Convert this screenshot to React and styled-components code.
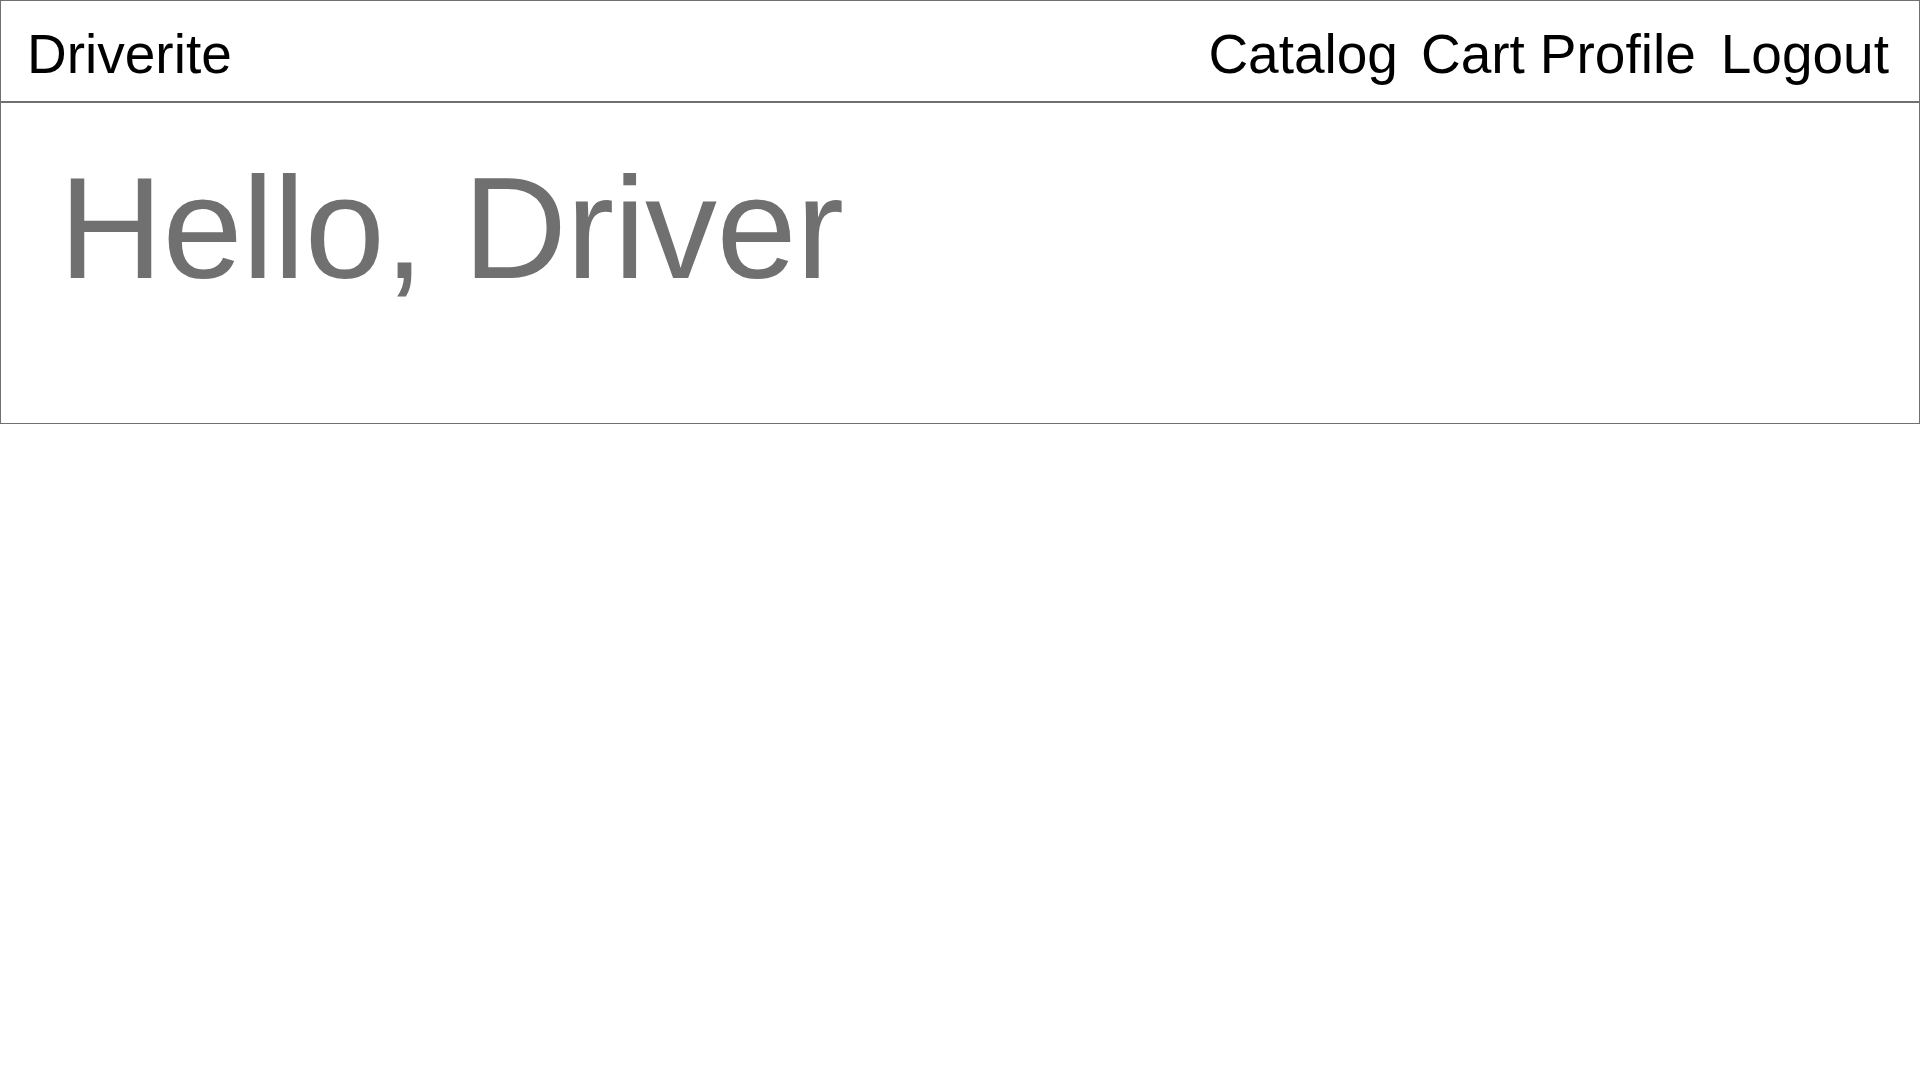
import React from 'react';
import styled, { createGlobalStyle } from 'styled-components';

const GlobalStyle = createGlobalStyle`
  html, body { margin: 0; padding: 0; background: #fff; }
  body { font-family: "Liberation Sans", Arial, sans-serif; }
  * { box-sizing: border-box; }
`;

const Header = styled.header`
  display: flex; align-items: center; justify-content: space-between;
  border: 1px solid #707070; height: 102px; padding: 0 30px 0 26px;
`;

const Brand = styled.div`
  font-size: 55px; line-height: 63px; color: #000; padding-top: 6px;
`;

const Nav = styled.nav`
  display: flex; align-items: center; gap: 16px; padding-top: 6px;
`;

const NavLink = styled.a`
  font-size: 55px; line-height: 63px; color: #000; text-decoration: none; cursor: pointer;
  margin-left: ${p => p.$extra || 0}px;
`;

const Welcome = styled.section`
  border: 1px solid #707070;
  height: 322px; padding: 43px 50px 0 58px;
`;

const Greeting = styled.h1`
  margin: 0; font-size: 144px; line-height: 166px; font-weight: 400; color: #707070;
  letter-spacing: -0.6px;
`;

export default function App() {
  return (
    <>
      <GlobalStyle />
      <Header>
        <Brand>Driverite</Brand>
        <Nav>
          <NavLink>Catalog</NavLink>
          <NavLink $extra={7}>Cart</NavLink>
          <NavLink $extra={-1}>Profile</NavLink>
          <NavLink $extra={9}>Logout</NavLink>
        </Nav>
      </Header>
      <Welcome>
        <Greeting>Hello, Driver</Greeting>
      </Welcome>
    </>
  );
}
